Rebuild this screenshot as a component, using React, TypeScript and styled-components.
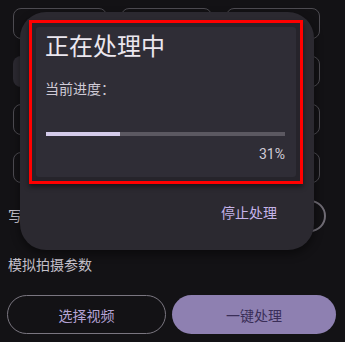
import styled, { createGlobalStyle } from 'styled-components';

const GlobalStyle = createGlobalStyle`
  html, body {
    margin: 0;
    padding: 0;
    background: #131215;
  }
  body {
    font-family: Roboto, 'Noto Sans CJK SC', sans-serif;
  }
`;

const Screen = styled.div`
  position: relative;
  width: 345px;
  height: 342px;
  overflow: hidden;
  background: #131215;
`;

const Content = styled.div`
  display: flex;
  flex-direction: column;
  padding: 8px 9px 0 7px;
`;

const ChipGrid = styled.div`
  display: grid;
  grid-template-columns: 94px 91px 94px;
  column-gap: 14px;
  row-gap: 17px;
  margin-left: 6px;
`;

const Chip = styled.div<{ selected?: boolean }>`
  height: 31px;
  box-sizing: border-box;
  border-radius: 8px;
  border: 1px solid ${({ selected }) => (selected ? 'transparent' : '#4d4b51')};
  background: ${({ selected }) => (selected ? '#2c2a31' : 'transparent')};
`;

const SwitchRow = styled.div`
  display: flex;
  align-items: center;
  justify-content: space-between;
  height: 32px;
  margin-top: 17px;
  padding-left: 1px;
  padding-right: 10px;
`;

const Label = styled.div`
  font-size: 14px;
  line-height: 20px;
  color: #c4c0ca;
`;

const SwitchTrack = styled.div`
  width: 52px;
  height: 32px;
  box-sizing: border-box;
  border-radius: 16px;
  border: 2px solid #6f6b74;
`;

const SectionLabel = styled(Label)`
  margin-top: 23px;
  padding-left: 1px;
`;

const ButtonRow = styled.div`
  display: flex;
  gap: 6px;
  margin-top: 20px;
`;

const Button = styled.div<{ filled?: boolean }>`
  flex: ${({ filled }) => (filled ? '164px' : '159px')} 0 0;
  height: 39px;
  box-sizing: border-box;
  border-radius: 20px;
  display: flex;
  align-items: center;
  justify-content: center;
  font-size: 14px;
  border: ${({ filled }) => (filled ? 'none' : '1px solid #7a7680')};
  background: ${({ filled }) => (filled ? '#8e80b1' : 'transparent')};
  color: ${({ filled }) => (filled ? '#3a2e58' : '#b4a3d6')};
`;

const Dialog = styled.div`
  position: absolute;
  left: 20px;
  top: 12px;
  width: 294px;
  box-sizing: border-box;
  padding: 8px 11px 27px 9px;
  border-radius: 26px;
  background: #2b2930;
  box-shadow: 0 4px 10px rgba(0, 0, 0, 0.45);
  display: flex;
  flex-direction: column;
`;

const Highlight = styled.div`
  border: 3px solid #ff0000;
  padding: 4px;
  background: #26242b;
  box-shadow: 0 3px 5px rgba(0, 0, 0, 0.45);
`;

const Panel = styled.div`
  background: #2f2d36;
  border-radius: 3px;
  padding: 5px 11px 13px 9px;
  display: flex;
  flex-direction: column;
`;

const Title = styled.div`
  font-size: 24px;
  line-height: 30px;
  color: #ebe7ef;
`;

const ProgressLabel = styled.div`
  margin-top: 17px;
  font-size: 14px;
  line-height: 20px;
  color: #d0cbd6;
`;

const Track = styled.div`
  margin-top: 33px;
  margin-left: 1px;
  height: 4px;
  background: #5b5861;
  overflow: hidden;
`;

const Fill = styled.div`
  height: 100%;
  background: #d4cbea;
`;

const Percent = styled.div`
  margin-top: 8px;
  align-self: flex-end;
  font-size: 14px;
  line-height: 20px;
  color: #d0cbd6;
`;

const Actions = styled.div`
  display: flex;
  justify-content: flex-end;
  margin-top: 19px;
  padding-right: 26px;
`;

const TextButton = styled.div`
  font-size: 14px;
  line-height: 20px;
  color: #c6b4ea;
`;

const progress = 31;

export default function App() {
  return (
    <Screen>
      <GlobalStyle />
      <Content>
        <ChipGrid>
          {Array.from({ length: 12 }).map((_, i) => (
            <Chip key={i} selected={i === 3} />
          ))}
        </ChipGrid>
        <SwitchRow>
          <Label>写入拍摄参数</Label>
          <SwitchTrack />
        </SwitchRow>
        <SectionLabel>模拟拍摄参数</SectionLabel>
        <ButtonRow>
          <Button>选择视频</Button>
          <Button filled>一键处理</Button>
        </ButtonRow>
      </Content>
      <Dialog>
        <Highlight>
          <Panel>
            <Title>正在处理中</Title>
            <ProgressLabel>当前进度：</ProgressLabel>
            <Track>
              <Fill style={{ width: `${progress}%` }} />
            </Track>
            <Percent>{progress}%</Percent>
          </Panel>
        </Highlight>
        <Actions>
          <TextButton>停止处理</TextButton>
        </Actions>
      </Dialog>
    </Screen>
  );
}
